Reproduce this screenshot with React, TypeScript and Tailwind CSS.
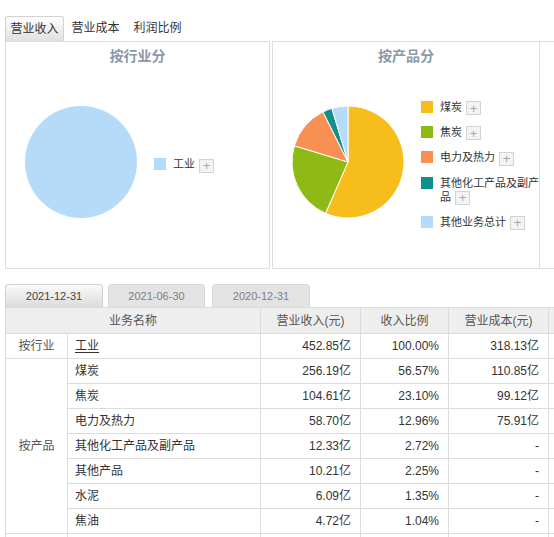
import React from 'react';

type Slice = { name: string; value: number; color: string; swatch: string };

const industry: Slice[] = [{ name: '工业', value: 100, color: '#b5dbf8', swatch: 'bg-[#b5dbf8]' }];

const products: Slice[] = [
  { name: '煤炭', value: 56.57, color: '#f6bd1c', swatch: 'bg-[#f6bd1c]' },
  { name: '焦炭', value: 23.1, color: '#8fb915', swatch: 'bg-[#8fb915]' },
  { name: '电力及热力', value: 12.96, color: '#f88f53', swatch: 'bg-[#f88f53]' },
  { name: '其他化工产品及副产品', value: 2.72, color: '#138e8e', swatch: 'bg-[#138e8e]' },
  { name: '其他业务总计', value: 4.65, color: '#b5dbf8', swatch: 'bg-[#b5dbf8]' },
];

const rows = [
  { name: '煤炭', income: '256.19亿', ratio: '56.57%', cost: '110.85亿', costRatio: '34.84%' },
  { name: '焦炭', income: '104.61亿', ratio: '23.10%', cost: '99.12亿', costRatio: '31.16%' },
  { name: '电力及热力', income: '58.70亿', ratio: '12.96%', cost: '75.91亿', costRatio: '23.86%' },
  { name: '其他化工产品及副产品', income: '12.33亿', ratio: '2.72%', cost: '-', costRatio: '-' },
  { name: '其他产品', income: '10.21亿', ratio: '2.25%', cost: '-', costRatio: '-' },
  { name: '水泥', income: '6.09亿', ratio: '1.35%', cost: '-', costRatio: '-' },
  { name: '焦油', income: '4.72亿', ratio: '1.04%', cost: '-', costRatio: '-' },
];

function Pie({ data }: { data: Slice[] }) {
  const cx = 57;
  const cy = 57;
  const r = 56;
  const total = data.reduce((s, d) => s + d.value, 0);
  if (data.length === 1) {
    return (
      <svg width="114" height="114" viewBox="0 0 114 114">
        <circle cx={cx} cy={cy} r={r} fill={data[0].color} />
      </svg>
    );
  }
  let acc = 0;
  return (
    <svg width="114" height="114" viewBox="0 0 114 114">
      {data.map((d) => {
        const a0 = (acc / total) * Math.PI * 2;
        acc += d.value;
        const a1 = (acc / total) * Math.PI * 2;
        const x0 = cx + r * Math.sin(a0);
        const y0 = cy - r * Math.cos(a0);
        const x1 = cx + r * Math.sin(a1);
        const y1 = cy - r * Math.cos(a1);
        const large = a1 - a0 > Math.PI ? 1 : 0;
        return (
          <path
            key={d.name}
            d={`M${cx},${cy} L${x0},${y0} A${r},${r} 0 ${large} 1 ${x1},${y1} Z`}
            fill={d.color}
            stroke="#fff"
            strokeWidth="1"
            strokeLinejoin="round"
          />
        );
      })}
    </svg>
  );
}

function Plus() {
  return (
    <span className="ml-[4px] inline-flex h-[14px] w-[15px] items-center justify-center border border-[#d3d3d3] bg-[#f3f3f3] align-middle text-[13px] leading-none text-[#a8a8a8]">
      +
    </span>
  );
}

function Legend({ data }: { data: Slice[] }) {
  return (
    <div className="flex h-[114px] flex-col justify-center gap-[10px] pt-[6px]">
      {data.map((d) => (
        <div key={d.name} className="flex items-start gap-[7px]">
          <span className={`mt-[1px] h-[12px] w-[12px] shrink-0 ${d.swatch}`} />
          <span className="w-[100px] text-[11px] leading-[14px] text-[#333]">
            {d.name}
            <Plus />
          </span>
        </div>
      ))}
    </div>
  );
}

function ChartPanel({ title, data, className }: { title: string; data: Slice[]; className: string }) {
  return (
    <div className={`h-[228px] shrink-0 border border-[#dedede] ${className}`}>
      <div className="h-[28px] text-center text-[14px] font-bold leading-[28px] text-[#8a99a8]">{title}</div>
      <div className="mt-[35px] flex items-start">
        <div className="ml-[18px] shrink-0">
          <Pie data={data} />
        </div>
        <div className="ml-[16px]">
          <Legend data={data} />
        </div>
      </div>
    </div>
  );
}

const td = 'h-[25px] border border-[#dcdcdc] px-[7px] text-[12px] leading-[16px] text-[#333]';
const num = `${td} text-right pr-[9px]`;
const th = 'h-[26px] border border-[#dcdcdc] text-[12px] font-normal text-[#555]';

export default function App() {
  return (
    <div className="h-[537px] w-[554px] overflow-hidden bg-white font-['Liberation_Sans','Noto_Sans_CJK_SC',sans-serif]">
      <div className="flex pl-[5px] pt-[16px] text-[12px] text-[#333]">
        <div className="h-[25px] w-[59px] rounded-t-[3px] border border-b-0 border-[#d2d2d2] bg-linear-to-b from-white to-[#e0e0e0] text-center leading-[24px]">
          营业收入
        </div>
        <div className="h-[25px] w-[63px] text-center leading-[25px]">营业成本</div>
        <div className="h-[25px] w-[61px] text-center leading-[25px]">利润比例</div>
      </div>

      <div className="flex pl-[5px]">
        <ChartPanel title="按行业分" data={industry} className="w-[265px]" />
        <ChartPanel title="按产品分" data={products} className="ml-[2px] w-[268px]" />
        <div className="h-[228px] w-[266px] shrink-0 border border-l-0 border-[#dedede]" />
      </div>

      <div className="mt-[15px] flex pl-[5px] text-[11px]">
        <div className="h-[23px] w-[98px] rounded-t-[4px] border border-b-0 border-[#d0d0d0] bg-linear-to-b from-[#fafafa] to-[#dcdcdc] text-center leading-[23px] text-[#444]">
          2021-12-31
        </div>
        <div className="ml-[5px] h-[23px] w-[97px] rounded-t-[4px] border border-b-0 border-[#d8d8d8] bg-[#e3e3e3] text-center leading-[23px] text-[#808080]">
          2021-06-30
        </div>
        <div className="ml-[7px] h-[23px] w-[98px] rounded-t-[4px] border border-b-0 border-[#d8d8d8] bg-[#e3e3e3] text-center leading-[23px] text-[#808080]">
          2020-12-31
        </div>
      </div>

      <table className="ml-[5px] w-[643px] table-fixed border-collapse">
        <colgroup>
          <col className="w-[62px]" />
          <col className="w-[193px]" />
          <col className="w-[100px]" />
          <col className="w-[88px]" />
          <col className="w-[100px]" />
          <col className="w-[100px]" />
        </colgroup>
        <thead>
          <tr className="bg-[#eeeeee]">
            <th colSpan={2} className={th}>业务名称</th>
            <th className={th}>营业收入(元)</th>
            <th className={th}>收入比例</th>
            <th className={th}>营业成本(元)</th>
            <th className={th}>成本比例</th>
          </tr>
        </thead>
        <tbody>
          <tr>
            <td className={`${td} text-center text-[#555]`}>按行业</td>
            <td className={td}>
              <span className="underline underline-offset-2">工业</span>
            </td>
            <td className={num}>452.85亿</td>
            <td className={num}>100.00%</td>
            <td className={num}>318.13亿</td>
            <td className={num}>100.00%</td>
          </tr>
          {rows.map((r, i) => (
            <tr key={r.name}>
              {i === 0 && (
                <td rowSpan={rows.length} className={`${td} text-center text-[#555]`}>
                  按产品
                </td>
              )}
              <td className={td}>{r.name}</td>
              <td className={num}>{r.income}</td>
              <td className={num}>{r.ratio}</td>
              <td className={num}>{r.cost}</td>
              <td className={num}>{r.costRatio}</td>
            </tr>
          ))}
          <tr>
            <td className={`${td} text-center text-[#555]`}>按地区</td>
            <td className={td}>国内</td>
            <td className={num}>452.85亿</td>
            <td className={num}>100.00%</td>
            <td className={num}>318.13亿</td>
            <td className={num}>100.00%</td>
          </tr>
        </tbody>
      </table>
    </div>
  );
}
